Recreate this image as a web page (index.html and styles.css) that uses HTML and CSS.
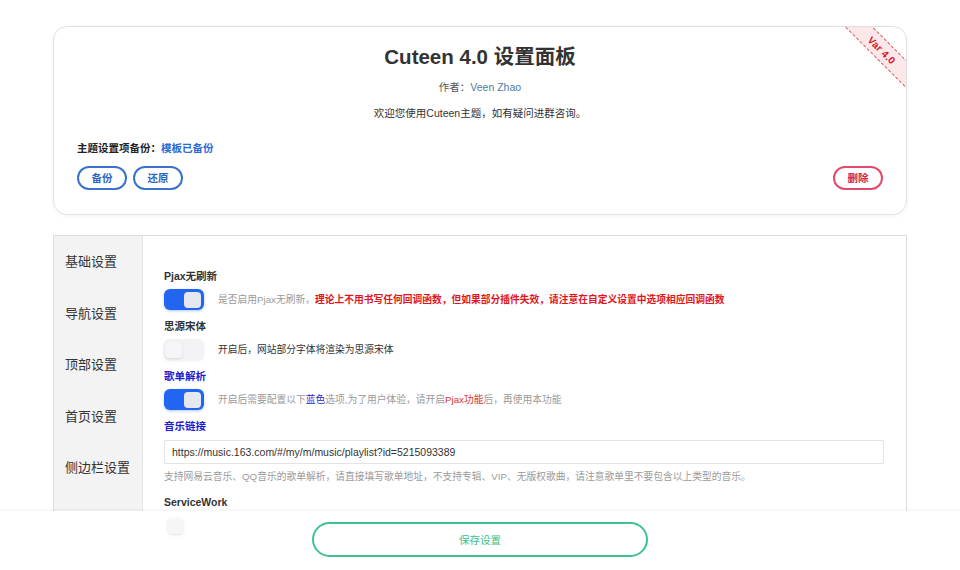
FILE: index.html
```html
<!DOCTYPE html>
<html lang="zh-CN">
<head>
<meta charset="utf-8">
<title>Cuteen 4.0 设置面板</title>
<link rel="stylesheet" href="styles.css">
</head>
<body>
<div class="wrap">
  <section class="card">
    <div class="ribbon"><span>Var 4.0</span></div>
    <h1 class="title">Cuteen 4.0 设置面板</h1>
    <p class="author">作者：<a class="author-link">Veen Zhao</a></p>
    <p class="welcome">欢迎您使用Cuteen主题，如有疑问进群咨询。</p>
    <p class="backup-label">主题设置项备份：<span class="backup-state">模板已备份</span></p>
    <div class="btn-row">
      <div class="btn-group">
        <button class="pill pill-blue">备份</button>
        <button class="pill pill-blue">还原</button>
      </div>
      <button class="pill pill-red">删除</button>
    </div>
  </section>

  <section class="panel">
    <nav class="side">
      <div class="side-item">基础设置</div>
      <div class="side-item">导航设置</div>
      <div class="side-item">顶部设置</div>
      <div class="side-item">首页设置</div>
      <div class="side-item">侧边栏设置</div>
      <div class="side-item">文章设置</div>
    </nav>
    <div class="content">
      <div class="label">Pjax无刷新</div>
      <div class="opt">
        <span class="switch on"><span class="knob"></span></span>
        <span class="desc muted">是否启用Pjax无刷新，<b class="red">理论上不用书写任何回调函数，但如果部分插件失效，请注意在自定义设置中选项相应回调函数</b></span>
      </div>

      <div class="label">思源宋体</div>
      <div class="opt">
        <span class="switch off"><span class="knob"></span></span>
        <span class="desc dark">开启后，网站部分字体将渲染为思源宋体</span>
      </div>

      <div class="label blue">歌单解析</div>
      <div class="opt">
        <span class="switch on"><span class="knob"></span></span>
        <span class="desc muted">开启后需要配置以下<span class="blue-n">蓝色</span>选项,为了用户体验，请开启<span class="red-n">Pjax功能</span>后，再使用本功能</span>
      </div>

      <div class="label blue">音乐链接</div>
      <input class="text-input" type="text" value="https://music.163.com/#/my/m/music/playlist?id=5215093389">
      <div class="help">支持网易云音乐、QQ音乐的歌单解析，请直接填写歌单地址，不支持专辑、VIP、无版权歌曲，请注意歌单里不要包含以上类型的音乐。</div>

      <div class="label sw-label">ServiceWork</div>
      <div class="opt">
        <span class="switch off sw"><span class="knob"></span></span>
        <span class="desc dark">开启后，网站将启用ServiceWork缓存</span>
      </div>
    </div>
  </section>
</div>

<footer class="savebar">
  <button class="save">保存设置</button>
</footer>
</body>
</html>
```

FILE: styles.css
```css
* { box-sizing: border-box; }
html, body { margin: 0; padding: 0; background: #fff; }
body {
  font-family: "Liberation Sans", "Noto Sans CJK SC", sans-serif;
  color: #333;
}
.wrap {
  width: 854px;
  margin: 26px auto 0;
  padding-bottom: 120px;
}

/* top card */
.card {
  position: relative;
  overflow: hidden;
  border: 1px solid #e1e1e1;
  border-radius: 14px;
  padding: 16px 23px 24px;
  box-shadow: 0 1px 4px rgba(0,0,0,0.05);
  text-align: center;
}
.ribbon {
  position: absolute;
  top: 13px;
  right: -38px;
  width: 124px;
  height: 20px;
  transform: rotate(45deg);
  background: #fde8e9;
  border-top: 1px dashed rgba(190,40,50,0.7);
  border-bottom: 1px dashed rgba(190,40,50,0.7);
  display: flex;
  align-items: center;
  justify-content: center;
}
.ribbon span {
  color: #d8111c;
  font-size: 10px;
  font-weight: bold;
  letter-spacing: 0.3px;
}
.title {
  margin: 0;
  font-size: 20.5px;
  line-height: 28px;
  font-weight: bold;
  color: #333;
}
.author {
  margin: 8px 0 0;
  font-size: 10.5px;
  line-height: 16px;
  color: #555;
}
.author-link { color: #4f7ba3; }
.welcome {
  margin: 10px 0 0;
  font-size: 10.5px;
  line-height: 16px;
  color: #333;
}
.backup-label {
  margin: 19px 0 0;
  text-align: left;
  font-size: 10.5px;
  line-height: 16px;
  font-weight: bold;
  color: #222;
}
.backup-state { color: #2a6ad8; }
.btn-row {
  margin-top: 10px;
  display: flex;
  justify-content: space-between;
  align-items: center;
}
.btn-group { display: flex; gap: 6px; }
.pill {
  width: 50px;
  height: 24px;
  border-radius: 12px;
  background: #fff;
  font-family: inherit;
  font-size: 10.5px;
  font-weight: bold;
  padding: 0;
  line-height: 20px;
  cursor: pointer;
}
.pill-blue { border: 2px solid #3a72cf; color: #2d63c4; }
.pill-red { border: 2px solid #e14a6c; color: #d2294d; }

/* settings panel */
.panel {
  margin-top: 20px;
  display: flex;
  border: 1px solid #dcdcdc;
  min-height: 420px;
}
.side {
  width: 89px;
  flex: none;
  background: #f3f3f3;
  border-right: 1px solid #e6e6e6;
}
.side-item {
  padding: 16px 0 16px 11px;
  font-size: 13px;
  line-height: 19.5px;
  color: #333;
}
.content {
  flex: 1;
  padding: 32px 22px 40px 21px;
}
.label {
  font-size: 10.5px;
  line-height: 16px;
  font-weight: bold;
  color: #333;
  margin-top: 8px;
}
.label:first-child { margin-top: 0; }
.label.blue { color: #1d1dcf; }
.sw-label { margin-top: 9px; }
.opt {
  margin-top: 5px;
  display: flex;
  align-items: center;
  gap: 14px;
}
.switch {
  position: relative;
  width: 40px;
  height: 21px;
  border-radius: 6px;
  flex: none;
  display: flex;
  align-items: center;
  padding: 0 3px;
}
.switch.on {
  background: #2265f1;
  justify-content: flex-end;
  box-shadow: 0 1px 3px rgba(34,101,241,0.35);
}
.switch.off {
  background: #f3f3f5;
  justify-content: flex-start;
  box-shadow: 0 1px 3px rgba(0,0,0,0.07);
  padding: 0 1px;
}
.knob {
  width: 17px;
  height: 16px;
  border-radius: 4px;
  background: #e6e8ef;
}
.switch.off .knob {
  background: #f6f6f9;
  box-shadow: 0 1px 3px rgba(0,0,0,0.12);
}
.switch.sw { padding: 0 4px; }
.switch.sw .knob {
  position: relative;
  z-index: 20;
  width: 15px;
}
.desc {
  font-size: 9.75px;
  line-height: 16px;
}
.muted { color: #9a9a9a; }
.dark { color: #333; }
.red { color: #e3141c; font-weight: bold; }
.red-n { color: #e0302a; }
.blue-n { color: #2b2bd3; }
.text-input {
  display: block;
  margin-top: 6px;
  width: 100%;
  height: 24px;
  border: 1px solid #e3e3e3;
  border-radius: 2px;
  padding: 0 7px;
  font-family: inherit;
  font-size: 10.5px;
  color: #333;
  outline: none;
}
.help {
  margin-top: 5px;
  font-size: 9.75px;
  line-height: 16px;
  color: #9a9a9a;
}

/* fixed save bar */
.savebar {
  position: fixed;
  left: 0;
  right: 0;
  bottom: 0;
  height: 59px;
  background: #fff;
  box-shadow: 0 -1px 3px rgba(0,0,0,0.06);
  display: flex;
  justify-content: center;
  align-items: center;
  z-index: 10;
}
.save {
  width: 336px;
  height: 35px;
  border: 2px solid #3dc48e;
  border-radius: 18px;
  background: #fff;
  color: #3dbf86;
  font-family: inherit;
  font-size: 10.5px;
  margin-bottom: 2px;
  cursor: pointer;
}
```
